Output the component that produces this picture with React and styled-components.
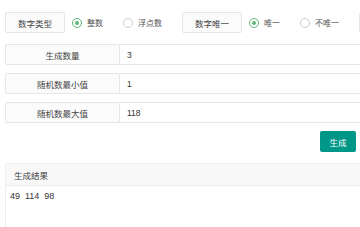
import React, { useState } from "react";
import styled, { createGlobalStyle } from "styled-components";

const GlobalStyle = createGlobalStyle`
  body {
    margin: 0;
    background: #fff;
    font-family: "Noto Sans CJK SC", "Liberation Sans", sans-serif;
    overflow: hidden;
  }
`;

const Page = styled.div`
  width: 440px;
  padding: 12px 0 0 5px;
`;

const TopRow = styled.div`
  display: flex;
  align-items: center;
  height: 21px;
`;

const TagBox = styled.div`
  box-sizing: border-box;
  width: 60px;
  height: 21px;
  border: 1px solid #e6e6e6;
  background: #fbfbfb;
  border-radius: 2px;
  display: flex;
  align-items: center;
  justify-content: center;
  font-size: 8.5px;
  color: #444;
  flex-shrink: 0;
  white-space: nowrap;
`;

const RadioGroup = styled.div`
  display: flex;
  align-items: center;
  margin-left: 7px;
  flex-shrink: 0;
`;

const RadioItem = styled.label`
  display: flex;
  align-items: center;
  margin-right: 20px;
  cursor: pointer;
  white-space: nowrap;
`;

const RadioIcon = styled.span`
  box-sizing: border-box;
  width: 10px;
  height: 10px;
  border-radius: 50%;
  border: 1px solid ${(p) => (p.checked ? "#5fb878" : "#cfcfcf")};
  display: flex;
  align-items: center;
  justify-content: center;
  flex-shrink: 0;

  &::after {
    content: "";
    width: 4px;
    height: 4px;
    border-radius: 50%;
    background: ${(p) => (p.checked ? "#5fb878" : "transparent")};
  }
`;

const RadioText = styled.span`
  margin-left: 5px;
  font-size: 8px;
  color: #555;
`;

const Rows = styled.div`
  display: flex;
  flex-direction: column;
  gap: 8px;
  margin-top: 11px;
`;

const Row = styled.div`
  display: flex;
  height: 21px;
`;

const RowLabel = styled.div`
  box-sizing: border-box;
  width: 115px;
  border: 1px solid #e6e6e6;
  background: #fbfbfb;
  border-radius: 2px 0 0 2px;
  display: flex;
  align-items: center;
  justify-content: center;
  font-size: 8.5px;
  color: #444;
`;

const RowValue = styled.div`
  box-sizing: border-box;
  flex: 1;
  border: 1px solid #e6e6e6;
  border-left: none;
  display: flex;
  align-items: center;
  padding-left: 7px;
  font-family: "Liberation Sans", "Noto Sans CJK SC", sans-serif;
  font-size: 8.5px;
  color: #333;
`;

const Actions = styled.div`
  display: flex;
  justify-content: flex-end;
  width: 351px;
  margin-top: 8px;
`;

const Button = styled.button`
  width: 36px;
  height: 21px;
  border: none;
  border-radius: 2px;
  background: #009688;
  color: #fff;
  font-family: "Noto Sans CJK SC", sans-serif;
  font-size: 8.5px;
  padding: 0;
  cursor: pointer;
`;

const Card = styled.div`
  margin-top: 11px;
  border: 1px solid #eee;
  border-radius: 2px;
  height: 80px;
`;

const CardHeader = styled.div`
  height: 21px;
  display: flex;
  align-items: center;
  padding-left: 8px;
  background: #f8f8f8;
  border-bottom: 1px solid #eee;
  font-size: 8.5px;
  color: #444;
`;

const CardBody = styled.div`
  padding: 5px 4px;
  font-family: "Liberation Sans", sans-serif;
  font-size: 9px;
  color: #333;
  white-space: pre;
`;

const Radio = ({ checked, label, onClick }) => (
  <RadioItem onClick={onClick}>
    <RadioIcon checked={checked} />
    <RadioText>{label}</RadioText>
  </RadioItem>
);

const fields = [
  { label: "生成数量", value: "3" },
  { label: "随机数最小值", value: "1" },
  { label: "随机数最大值", value: "118" },
];

export default function App() {
  const [kind, setKind] = useState("int");
  const [unique, setUnique] = useState(true);

  return (
    <>
      <GlobalStyle />
      <Page>
        <TopRow>
          <TagBox>数字类型</TagBox>
          <RadioGroup>
            <Radio checked={kind === "int"} label="整数" onClick={() => setKind("int")} />
            <Radio checked={kind === "float"} label="浮点数" onClick={() => setKind("float")} />
          </RadioGroup>
          <TagBox>数字唯一</TagBox>
          <RadioGroup>
            <Radio checked={unique} label="唯一" onClick={() => setUnique(true)} />
            <Radio checked={!unique} label="不唯一" onClick={() => setUnique(false)} />
          </RadioGroup>
          <TagBox>小数位数</TagBox>
        </TopRow>

        <Rows>
          {fields.map((f) => (
            <Row key={f.label}>
              <RowLabel>{f.label}</RowLabel>
              <RowValue>{f.value}</RowValue>
            </Row>
          ))}
        </Rows>

        <Actions>
          <Button>生成</Button>
        </Actions>

        <Card>
          <CardHeader>生成结果</CardHeader>
          <CardBody>{"49  114  98"}</CardBody>
        </Card>
      </Page>
    </>
  );
}
